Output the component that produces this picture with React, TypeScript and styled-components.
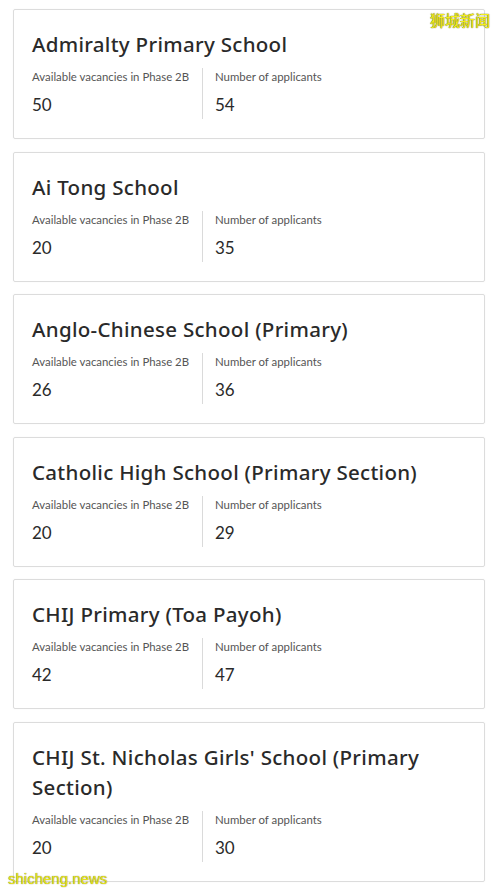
import React from "react";
import styled, { createGlobalStyle } from "styled-components";

const Global = createGlobalStyle`
  html, body { margin: 0; padding: 0; background: #ffffff; }
  body { font-family: Lato, "Noto Sans", sans-serif; color: #2f2f2f; }
`;

const Page = styled.div`
  position: relative;
  width: 498px;
  min-height: 891px;
  padding: 9px 13px 0 13px;
  box-sizing: border-box;
  display: flex;
  flex-direction: column;
  gap: 12.5px;
  background: #fff;
`;

const Card = styled.div`
  border: 1px solid #dcdcdc;
  border-radius: 2px;
  background: #fff;
  padding: 19px 18px 19px 18px;
  box-shadow: 0 0 2px rgba(0, 0, 0, 0.04);
`;

const Title = styled.h2`
  margin: 0 0 9px 0;
  font-family: "Noto Sans", "Open Sans", sans-serif;
  font-weight: 500;
  font-size: 20.5px;
  line-height: 30px;
  color: #2a2a2a;
  letter-spacing: 0.3px;
`;

const Stats = styled.div`
  display: flex;
`;

const Stat = styled.div<{ $first?: boolean }>`
  display: flex;
  flex-direction: column;
  width: ${(p) => (p.$first ? "170px" : "auto")};
  padding-left: ${(p) => (p.$first ? "0" : "12px")};
  border-right: ${(p) => (p.$first ? "1px solid #dadada" : "none")};
  padding-bottom: 2px;
`;

const Label = styled.div`
  font-family: Lato, sans-serif;
  font-size: 11.4px;
  line-height: 18px;
  color: #555;
`;

const Value = styled.div`
  margin-top: 7px;
  font-family: Lato, sans-serif;
  font-size: 17px;
  line-height: 24px;
  color: #2a2a2a;
`;

const WatermarkCn = styled.div`
  position: absolute;
  top: 10px;
  right: 8px;
  font-family: "Noto Sans CJK SC", sans-serif;
  font-size: 15px;
  line-height: 20px;
  color: #f5ef1a;
  text-shadow: 0 0 1px #6b6b00, 0 0 1px #6b6b00;
`;

const WatermarkEn = styled.div`
  position: absolute;
  left: 8px;
  top: 869px;
  font-family: "Liberation Sans", Arial, sans-serif;
  font-size: 15px;
  line-height: 20px;
  color: #e6e21a;
  text-shadow: 0 0 1px #5a5a00;
`;

type School = { name: string; vac: number; apps: number };

const schools: School[] = [
  { name: "Admiralty Primary School", vac: 50, apps: 54 },
  { name: "Ai Tong School", vac: 20, apps: 35 },
  { name: "Anglo-Chinese School (Primary)", vac: 26, apps: 36 },
  { name: "Catholic High School (Primary Section)", vac: 20, apps: 29 },
  { name: "CHIJ Primary (Toa Payoh)", vac: 42, apps: 47 },
  { name: "CHIJ St. Nicholas Girls' School (Primary Section)", vac: 20, apps: 30 },
];

export default function App() {
  return (
    <>
      <Global />
      <Page>
        {schools.map((s) => (
          <Card key={s.name}>
            <Title>{s.name}</Title>
            <Stats>
              <Stat $first>
                <Label>Available vacancies in Phase 2B</Label>
                <Value>{s.vac}</Value>
              </Stat>
              <Stat>
                <Label>Number of applicants</Label>
                <Value>{s.apps}</Value>
              </Stat>
            </Stats>
          </Card>
        ))}
        <WatermarkCn>狮城新闻</WatermarkCn>
        <WatermarkEn>shicheng.news</WatermarkEn>
      </Page>
    </>
  );
}
